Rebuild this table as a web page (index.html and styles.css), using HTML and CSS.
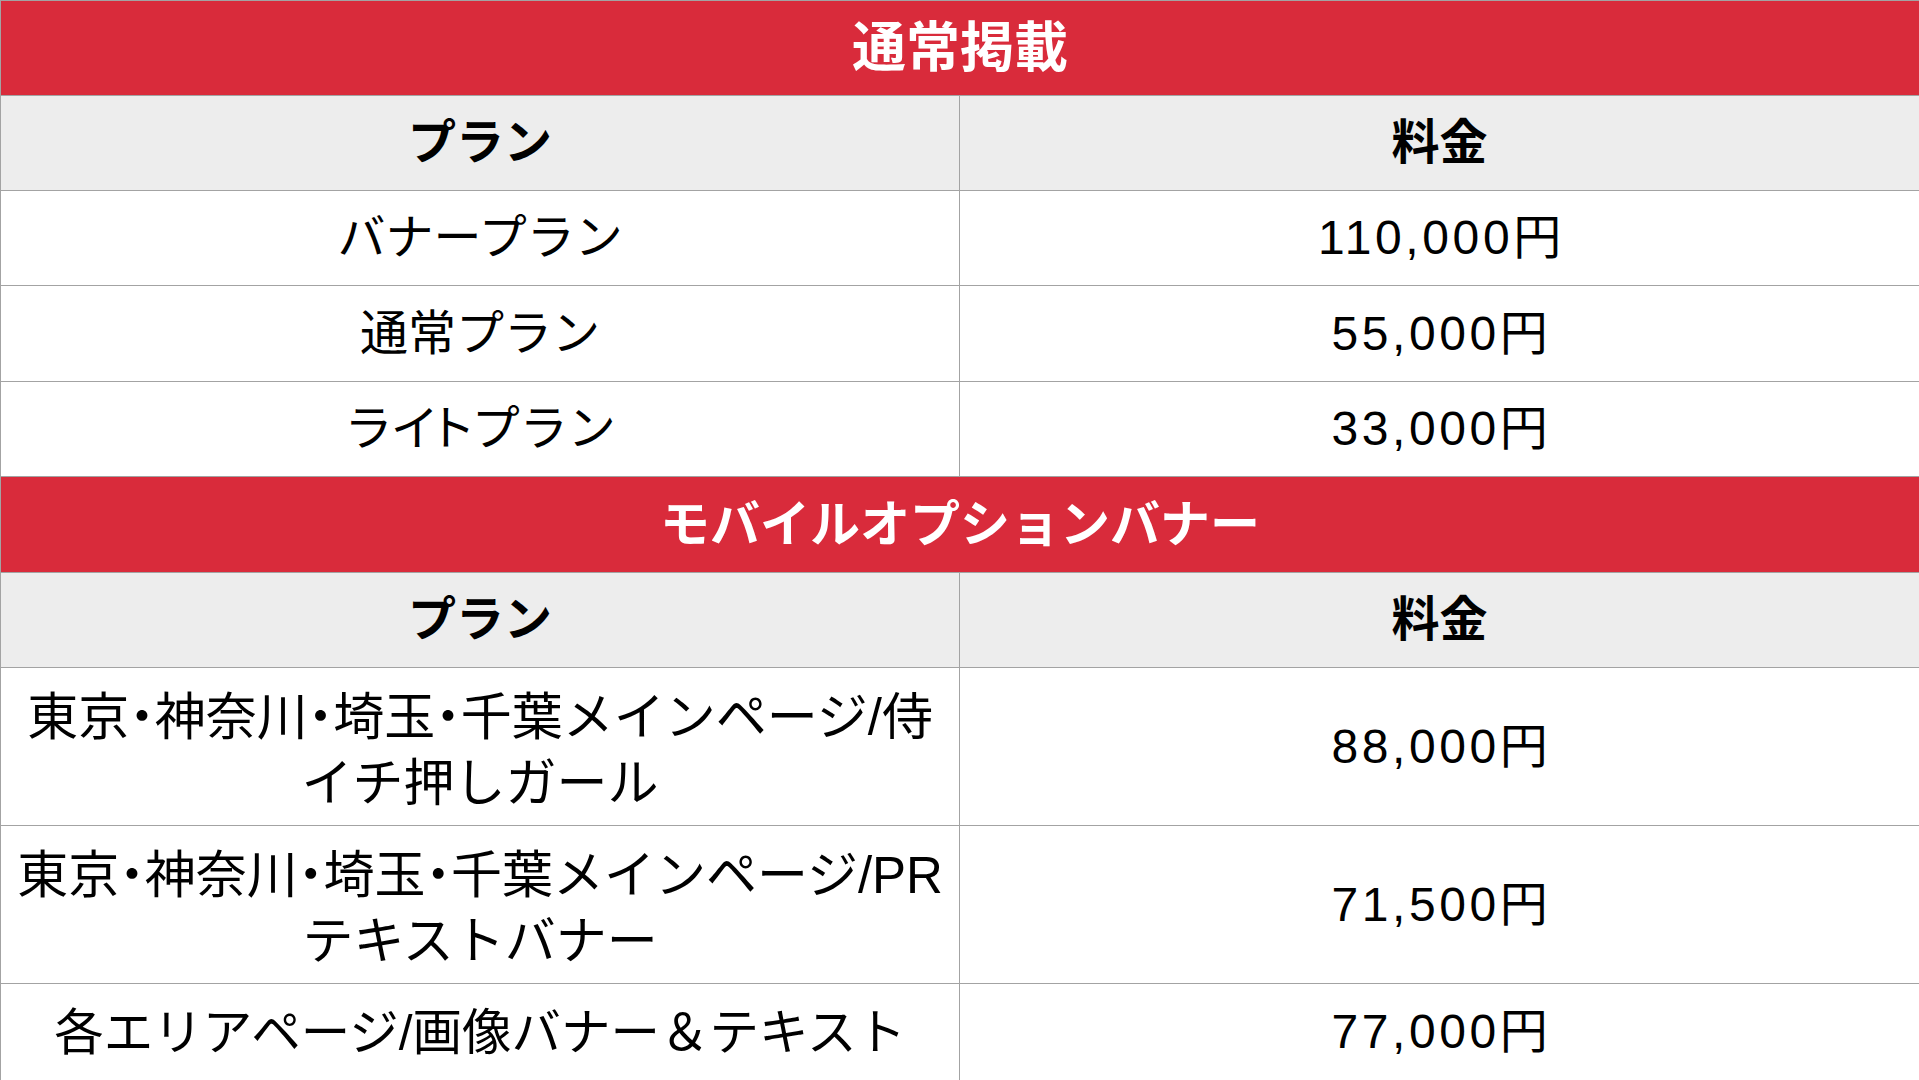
FILE: index.html
```html
<!DOCTYPE html>
<html lang="ja">
<head>
<meta charset="utf-8">
<title>料金表</title>
<link rel="stylesheet" href="styles.css">
</head>
<body>
<table class="price-table">
  <colgroup><col class="col-plan"><col class="col-price"></colgroup>
  <tbody>
    <tr class="section first h95"><th colspan="2">通常掲載</th></tr>
    <tr class="head h95"><th>プラン</th><th>料金</th></tr>
    <tr class="h95"><td>バナープラン</td><td class="price"><span class="num">110,000</span>円</td></tr>
    <tr class="h96"><td>通常プラン</td><td class="price"><span class="num">55,000</span>円</td></tr>
    <tr class="h95"><td>ラ<span class="sep">イト</span>プラン</td><td class="price"><span class="num">33,000</span>円</td></tr>
    <tr class="section h96"><th colspan="2">モバイルオプションバナー</th></tr>
    <tr class="head h95"><th>プラン</th><th>料金</th></tr>
    <tr class="tall"><td class="multi">東京<span class="sep">・</span>神奈川<span class="sep">・</span>埼玉<span class="sep">・</span>千葉メインページ/侍<br>イチ押しガール</td><td class="price"><span class="num">88,000</span>円</td></tr>
    <tr class="tall"><td class="multi">東京<span class="sep">・</span>神奈川<span class="sep">・</span>埼玉<span class="sep">・</span>千葉メインページ/PR<br>テキストバナー</td><td class="price"><span class="num">71,500</span>円</td></tr>
    <tr class="h97"><td class="wide">各エリアページ/画像バナー＆テキスト</td><td class="price"><span class="num">77,000</span>円</td></tr>
  </tbody>
</table>
</body>
</html>
```

FILE: styles.css
```css
html, body {
  margin: 0;
  padding: 0;
  background: #ffffff;
}

body {
  font-family: "Liberation Sans", "Noto Sans CJK JP", sans-serif;
  color: #000000;
}

.price-table {
  width: 100%;
  height: 1080px;
  border-collapse: collapse;
  table-layout: fixed;
}

.col-plan,
.col-price {
  width: 50%;
}

.price-table th,
.price-table td {
  border: 1px solid #a3a3a3;
  text-align: center;
  vertical-align: middle;
  padding: 0 8px;
  font-size: 48px;
  line-height: 1.2;
  white-space: nowrap;
}

.price-table tr:last-child td {
  border-bottom: none;
}

.price-table tr > :last-child {
  border-right: none;
}

.h95 { height: 95px; }
.h96 { height: 96px; }
.h97 { height: 97px; }
.tall { height: 158px; }

.section th {
  background: #d92b3b;
  color: #ffffff;
  font-size: 50px;
  font-weight: 700;
}

.section.first th {
  font-size: 54px;
}

.head th {
  background: #ededed;
  font-size: 48px;
  font-weight: 700;
}

.price-table td.multi {
  font-size: 51px;
  line-height: 66px;
  padding-top: 8px;
}

.price-table td.wide {
  font-size: 49.5px;
}

.sep {
  font-feature-settings: "palt";
}

.num {
  letter-spacing: 3.6px;
}
```
